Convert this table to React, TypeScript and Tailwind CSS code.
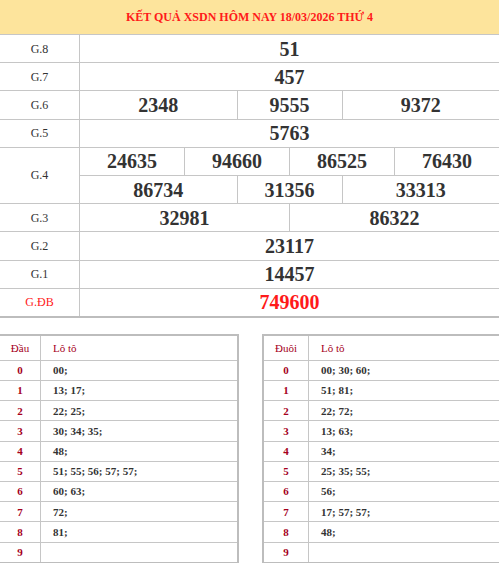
const prizes: { label: string; rows: { span: string; value: string }[][]; special?: boolean }[] = [
  { label: "G.8", rows: [[{ span: "col-span-8", value: "51" }]] },
  { label: "G.7", rows: [[{ span: "col-span-8", value: "457" }]] },
  {
    label: "G.6",
    rows: [
      [
        { span: "col-span-3", value: "2348" },
        { span: "col-span-2", value: "9555" },
        { span: "col-span-3", value: "9372" },
      ],
    ],
  },
  { label: "G.5", rows: [[{ span: "col-span-8", value: "5763" }]] },
  {
    label: "G.4",
    rows: [
      [
        { span: "col-span-2", value: "24635" },
        { span: "col-span-2", value: "94660" },
        { span: "col-span-2", value: "86525" },
        { span: "col-span-2", value: "76430" },
      ],
      [
        { span: "col-span-3", value: "86734" },
        { span: "col-span-2", value: "31356" },
        { span: "col-span-3", value: "33313" },
      ],
    ],
  },
  {
    label: "G.3",
    rows: [
      [
        { span: "col-span-4", value: "32981" },
        { span: "col-span-4", value: "86322" },
      ],
    ],
  },
  { label: "G.2", rows: [[{ span: "col-span-8", value: "23117" }]] },
  { label: "G.1", rows: [[{ span: "col-span-8", value: "14457" }]] },
  { label: "G.ĐB", rows: [[{ span: "col-span-8", value: "749600" }]], special: true },
];

const dau = ["00;", "13; 17;", "22; 25;", "30; 34; 35;", "48;", "51; 55; 56; 57; 57;", "60; 63;", "72;", "81;", ""];
const duoi = ["00; 30; 60;", "51; 81;", "22; 72;", "13; 63;", "34;", "25; 35; 55;", "56;", "17; 57; 57;", "48;", ""];

function LotoTable({ title, items, firstCol, className }: { title: string; items: string[]; firstCol: string; className: string }) {
  return (
    <div className={`border-t-2 border-b border-[#bdbdbd] ${className}`}>
      <div className={`grid ${firstCol} grid-rows-[24px_repeat(10,19.2px)] gap-px bg-[#c6c6c6]`}>
        <div className="bg-white flex items-center justify-center text-[11px] text-[#a5001c]">{title}</div>
        <div className="bg-white flex items-center pl-3 text-[11px] text-[#a5001c]">Lô tô</div>
        {items.map((v, i) => (
          <>
            <div key={`d${i}`} className="bg-white flex items-center justify-center text-[11px] font-bold text-[#a5001c]">
              {i}
            </div>
            <div key={`v${i}`} className="bg-white flex items-center pl-3 text-[11px] font-bold text-[#333]">
              {v}
            </div>
          </>
        ))}
      </div>
    </div>
  );
}

export default function App() {
  return (
    <div className="w-[499px] h-[563px] overflow-hidden bg-white font-[Liberation_Serif,Times_New_Roman,serif]">
      <div className="border-b-2 border-[#bdbdbd]">
        <div className="grid grid-cols-[79px_repeat(8,1fr)] grid-rows-[34px_repeat(10,27.2px)] gap-px bg-[#c6c6c6]">
          <div className="col-span-9 bg-[#fde49c] flex items-center justify-center text-[12px] font-bold text-[#ff1a1a]">
            KẾT QUẢ XSDN HÔM NAY 18/03/2026 THỨ 4
          </div>
          {prizes.map((p) => (
            <>
              <div
                key={p.label}
                className={`bg-white flex items-center justify-center text-[12px] ${p.rows.length > 1 ? "row-span-2" : ""} ${
                  p.special ? "text-[#ff1a1a]" : "text-[#333]"
                }`}
              >
                {p.label}
              </div>
              {p.rows.map((r) =>
                r.map((c, j) => (
                  <div
                    key={`${p.label}-${c.value}-${j}`}
                    className={`${c.span} bg-white flex items-center justify-center text-[20px] font-bold ${
                      p.special ? "text-[#ff1a1a]" : "text-[#333]"
                    }`}
                  >
                    {c.value}
                  </div>
                ))
              )}
            </>
          ))}
        </div>
      </div>

      <div className="mt-4 flex gap-[23px]">
        <LotoTable title="Đầu" items={dau} firstCol="grid-cols-[40px_1fr]" className="w-[239px] shrink-0 border-r-2" />
        <LotoTable title="Đuôi" items={duoi} firstCol="grid-cols-[44px_1fr]" className="flex-1 border-l-2" />
      </div>
    </div>
  );
}
